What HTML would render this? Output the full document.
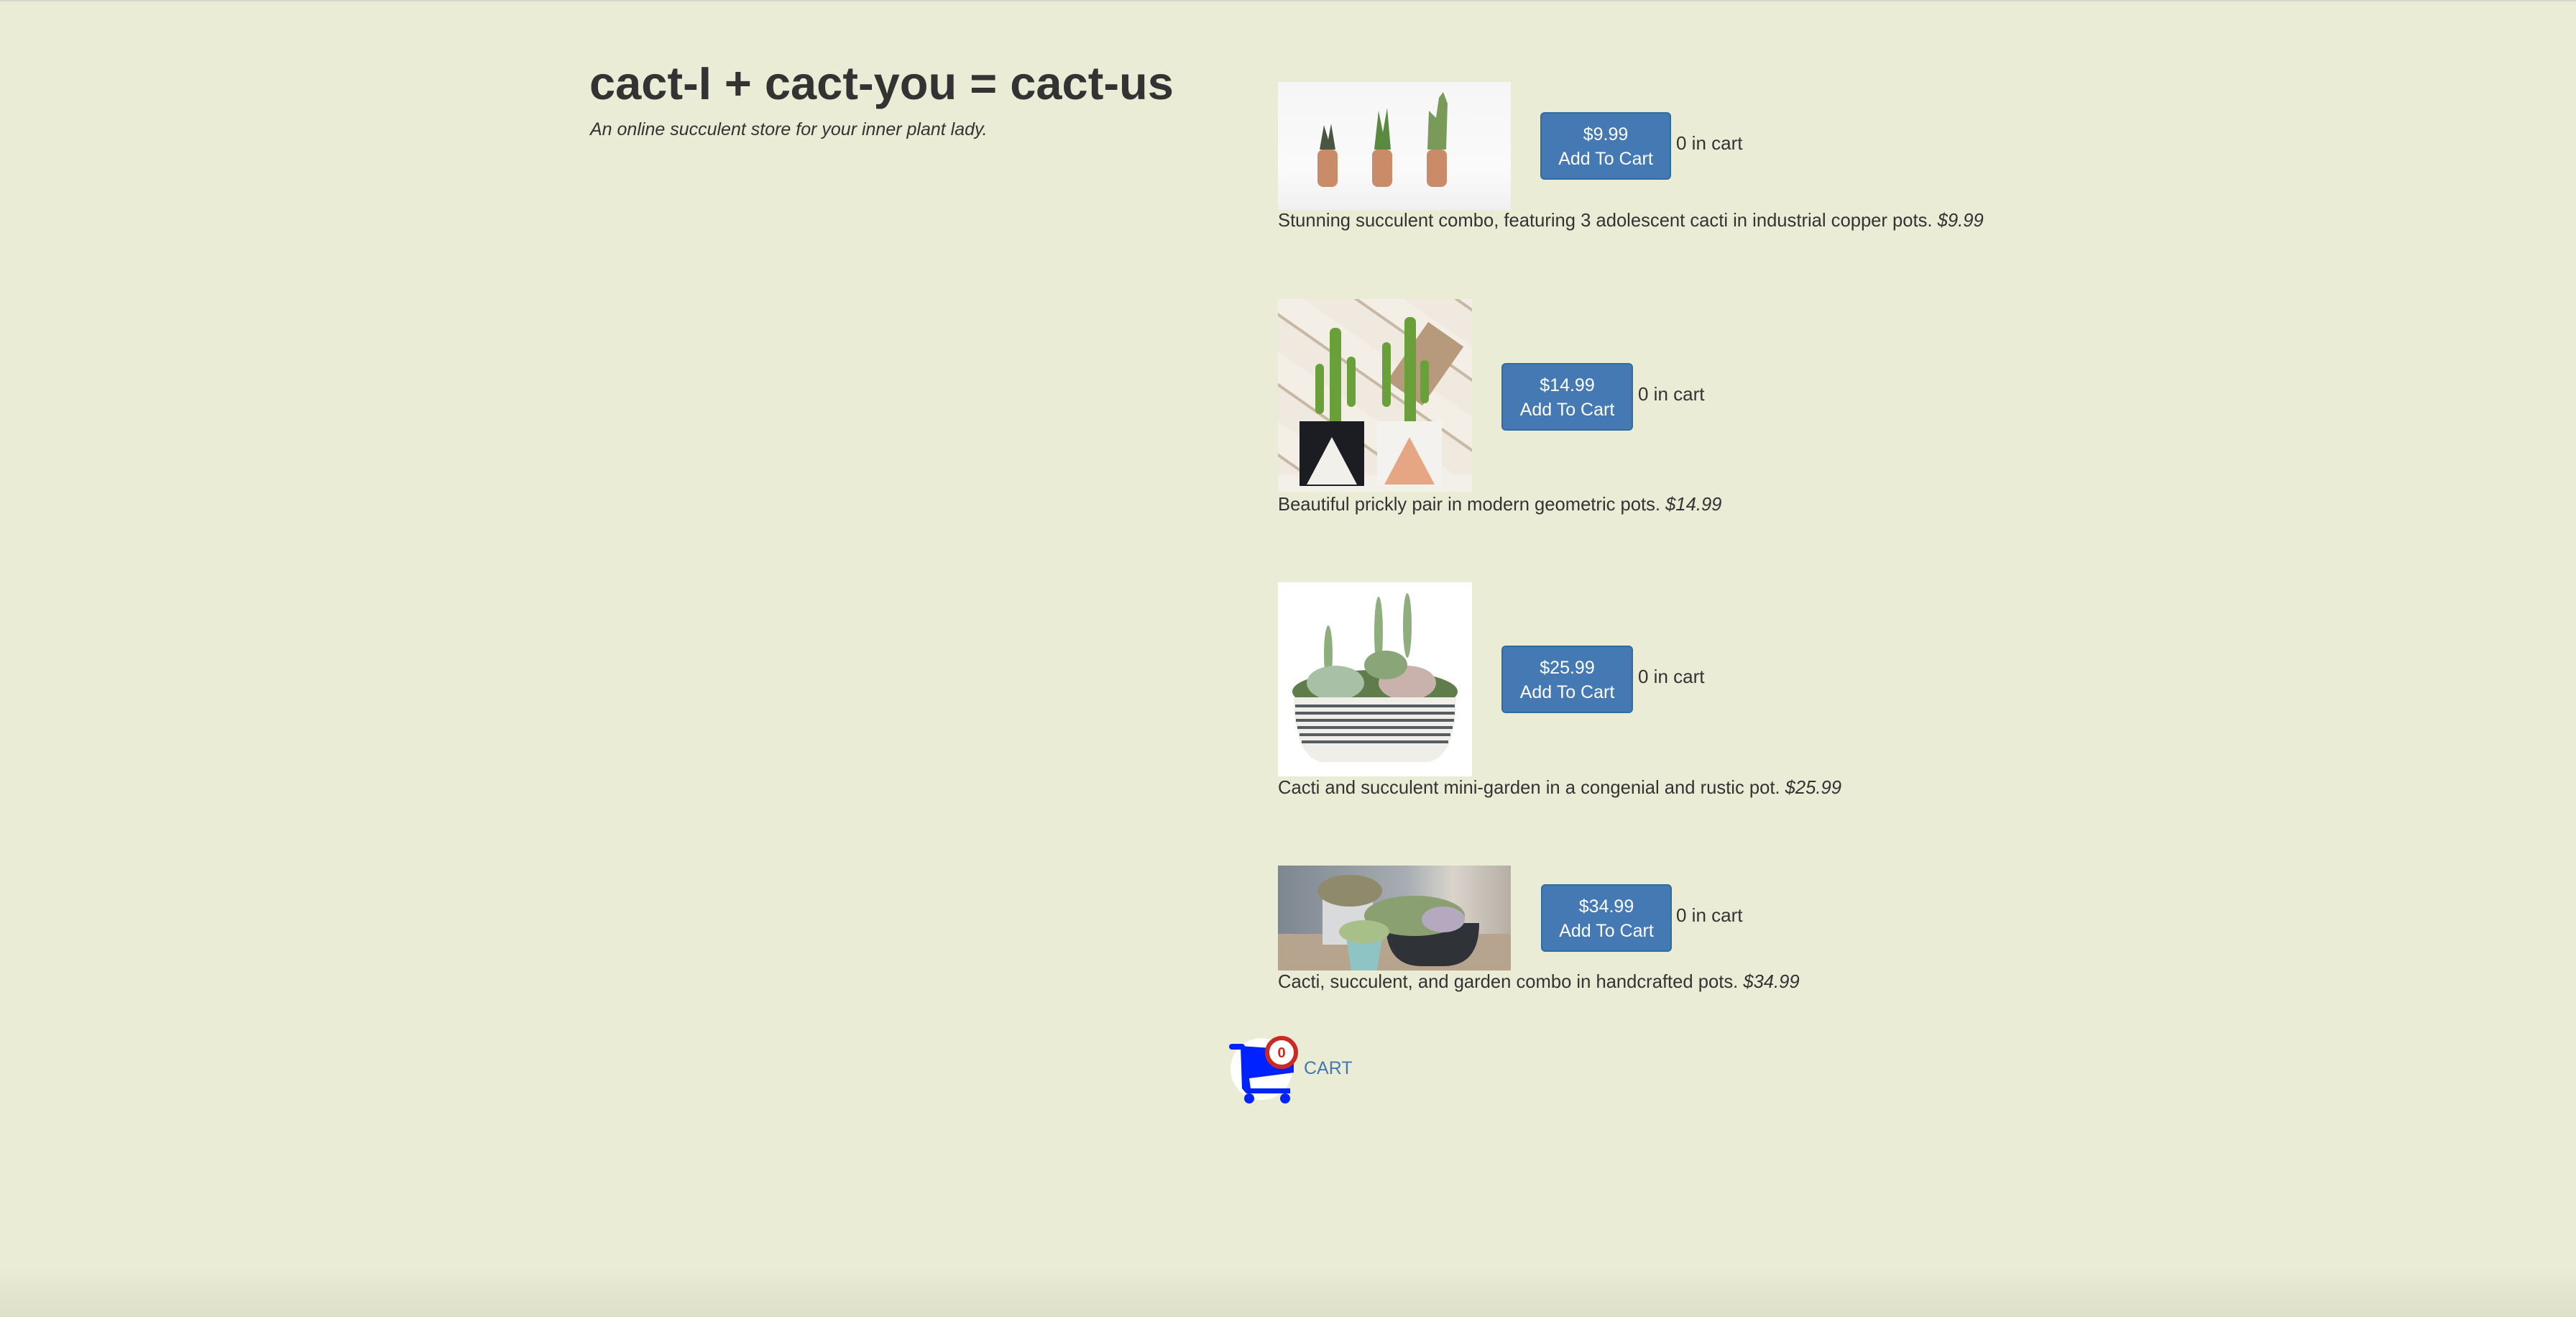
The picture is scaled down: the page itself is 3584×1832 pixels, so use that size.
<!DOCTYPE html>
<html><head><meta charset="utf-8"><style>
*{margin:0;padding:0;box-sizing:border-box}
html,body{width:3584px;height:1832px;overflow:hidden}
body{background:#eaecd6;font-family:"Liberation Sans",Arial,sans-serif;color:#333;position:relative;border-top:2px solid #d6d6cc}
.shade{position:absolute;left:0;right:0;bottom:0;height:70px;background:linear-gradient(#eaecd6,#dedfc9)}
.a{position:absolute}
h1{position:absolute;left:820px;top:76px;font-size:65px;font-weight:bold;letter-spacing:0;white-space:nowrap;color:#333}
.sub{left:821px;top:164px;font-size:25px;font-style:italic}
.btn{position:absolute;background:#4479b3;border:2px solid #2e6da4;border-radius:6px;color:#fff;font-size:25px;line-height:34px;text-align:center;padding-top:12px}
.cnt{font-size:26px;white-space:nowrap}
.desc{font-size:25.6px;white-space:nowrap}
.img{position:absolute;overflow:hidden}
</style></head><body>
<h1>cact-I + cact-you = cact-us</h1>
<div class="a sub">An online succulent store for your inner plant lady.</div>

<!-- item 1 -->
<div class="img" style="left:1778px;top:112px;width:324px;height:178px;background:linear-gradient(#f6f6f6,#fafafa 70%,#f0f0f0)">
<svg width="324" height="178"><g fill="#c98b68"><rect x="55" y="94" width="28" height="52" rx="8"/><rect x="131" y="94" width="28" height="52" rx="8"/><rect x="207" y="94" width="28" height="52" rx="8"/></g>
<path d="M58 94 L64 60 L70 80 L74 58 L80 94Z" fill="#4a5544"/><path d="M134 94 L140 40 L146 70 L152 36 L157 94Z" fill="#5a8a40"/><path d="M208 94 L210 40 L220 50 L224 22 L230 14 L236 30 L234 94Z" fill="#7a9a5a"/></svg></div>
<div class="btn" style="left:2143px;top:154px;width:182px;height:94px">$9.99<br>Add To Cart</div>
<div class="a cnt" style="left:2332px;top:182px">0 in cart</div>
<div class="a desc" style="left:1778px;top:291px">Stunning succulent combo, featuring 3 adolescent cacti in industrial copper pots. <i>$9.99</i></div>

<!-- item 2 -->
<div class="img" style="left:1778px;top:414px;width:270px;height:268px;background:repeating-linear-gradient(35deg,#efe9df 0 40px,#c9b8a2 40px 44px,#f3efe7 44px 80px)">
<svg width="270" height="268"><rect x="175" y="40" width="60" height="100" fill="#b79a7c" transform="rotate(35 205 90)"/>
<g fill="#6aa03a"><rect x="72" y="40" width="16" height="140" rx="7"/><rect x="52" y="90" width="12" height="70" rx="6"/><rect x="96" y="80" width="12" height="70" rx="6"/><rect x="176" y="25" width="16" height="155" rx="7"/><rect x="145" y="60" width="12" height="90" rx="6"/><rect x="198" y="85" width="12" height="60" rx="6"/></g>
<rect x="0" y="245" width="270" height="23" fill="#f3f0ea"/>
<rect x="30" y="170" width="90" height="90" fill="#1b1d22"/><path d="M40 258 L75 192 L110 258Z" fill="#f2f0ea"/>
<rect x="138" y="170" width="90" height="90" fill="#f4f2ee"/><path d="M148 258 L183 192 L218 258Z" fill="#e6a583"/></svg></div>
<div class="btn" style="left:2089px;top:503px;width:183px;height:94px">$14.99<br>Add To Cart</div>
<div class="a cnt" style="left:2279px;top:531px">0 in cart</div>
<div class="a desc" style="left:1778px;top:686px">Beautiful prickly pair in modern geometric pots. <i>$14.99</i></div>

<!-- item 3 -->
<div class="img" style="left:1778px;top:808px;width:270px;height:270px;background:#fff">
<svg width="270" height="270"><g fill="#8fae7e"><ellipse cx="70" cy="100" rx="6" ry="40"/><ellipse cx="140" cy="70" rx="6" ry="50"/><ellipse cx="180" cy="60" rx="6" ry="45"/></g>
<ellipse cx="135" cy="152" rx="115" ry="30" fill="#5f7d4a"/><ellipse cx="80" cy="140" rx="40" ry="24" fill="#a8c0a6"/><ellipse cx="180" cy="140" rx="40" ry="24" fill="#c8b2ab"/><ellipse cx="150" cy="115" rx="30" ry="20" fill="#8aa577"/>
<path d="M22 160 Q22 240 60 250 L210 250 Q248 240 248 160 Z" fill="#f0eee8"/>
<g stroke="#565d62" stroke-width="4"><path d="M24 172 H246M24 182 H246M25 192 H245M27 202 H243M30 212 H240M33 222 H237"/></g></svg></div>
<div class="btn" style="left:2089px;top:896px;width:183px;height:94px">$25.99<br>Add To Cart</div>
<div class="a cnt" style="left:2279px;top:924px">0 in cart</div>
<div class="a desc" style="left:1778px;top:1080px">Cacti and succulent mini-garden in a congenial and rustic pot. <i>$25.99</i></div>

<!-- item 4 -->
<div class="img" style="left:1778px;top:1202px;width:324px;height:146px;background:linear-gradient(90deg,#7d8790,#a7adb2 55%,#d9d4cc 75%,#b7aea3)">
<svg width="324" height="146"><rect x="0" y="95" width="324" height="51" fill="#b6a48e"/>
<rect x="62" y="40" width="70" height="70" fill="#d8dadc"/><ellipse cx="100" cy="35" rx="45" ry="22" fill="#8f8a6b"/>
<path d="M150 80 Q150 140 200 140 L230 140 Q280 140 280 80Z" fill="#2f3337"/><ellipse cx="190" cy="70" rx="70" ry="28" fill="#8aa071"/><ellipse cx="230" cy="75" rx="30" ry="18" fill="#b5a9c0"/>
<path d="M95 100 L145 100 L138 146 L102 146Z" fill="#8fc4c4"/><ellipse cx="120" cy="92" rx="35" ry="16" fill="#a9bf8a"/></svg></div>
<div class="btn" style="left:2144px;top:1228px;width:182px;height:94px">$34.99<br>Add To Cart</div>
<div class="a cnt" style="left:2332px;top:1256px">0 in cart</div>
<div class="a desc" style="left:1778px;top:1350px">Cacti, succulent, and garden combo in handcrafted pots. <i>$34.99</i></div>

<!-- cart -->
<svg class="a" style="left:1700px;top:1420px" width="110" height="120" viewBox="0 0 110 120">
<circle cx="55" cy="65" r="43" fill="#fff"/>
<rect x="10" y="30" width="22" height="8" rx="4" fill="#0022ff"/>
<path d="M26 33 L100 38 L100 70 L38 78 L40 92 L95 92 L95 99 L34 99 L28 92 Z" fill="#0022ff"/>
<circle cx="38" cy="106" r="7" fill="#0022ff"/><circle cx="88" cy="106" r="7" fill="#0022ff"/>
<circle cx="83" cy="42" r="20" fill="#fff" stroke="#cc2a20" stroke-width="6"/>
<text x="83" y="49" text-anchor="middle" font-family="Liberation Sans,sans-serif" font-weight="bold" font-size="20" fill="#cc2a20">0</text>
</svg>
<div class="a" style="left:1814px;top:1470px;font-size:25px;color:#4278b2">CART</div>
<div class="shade"></div>
</body></html>
